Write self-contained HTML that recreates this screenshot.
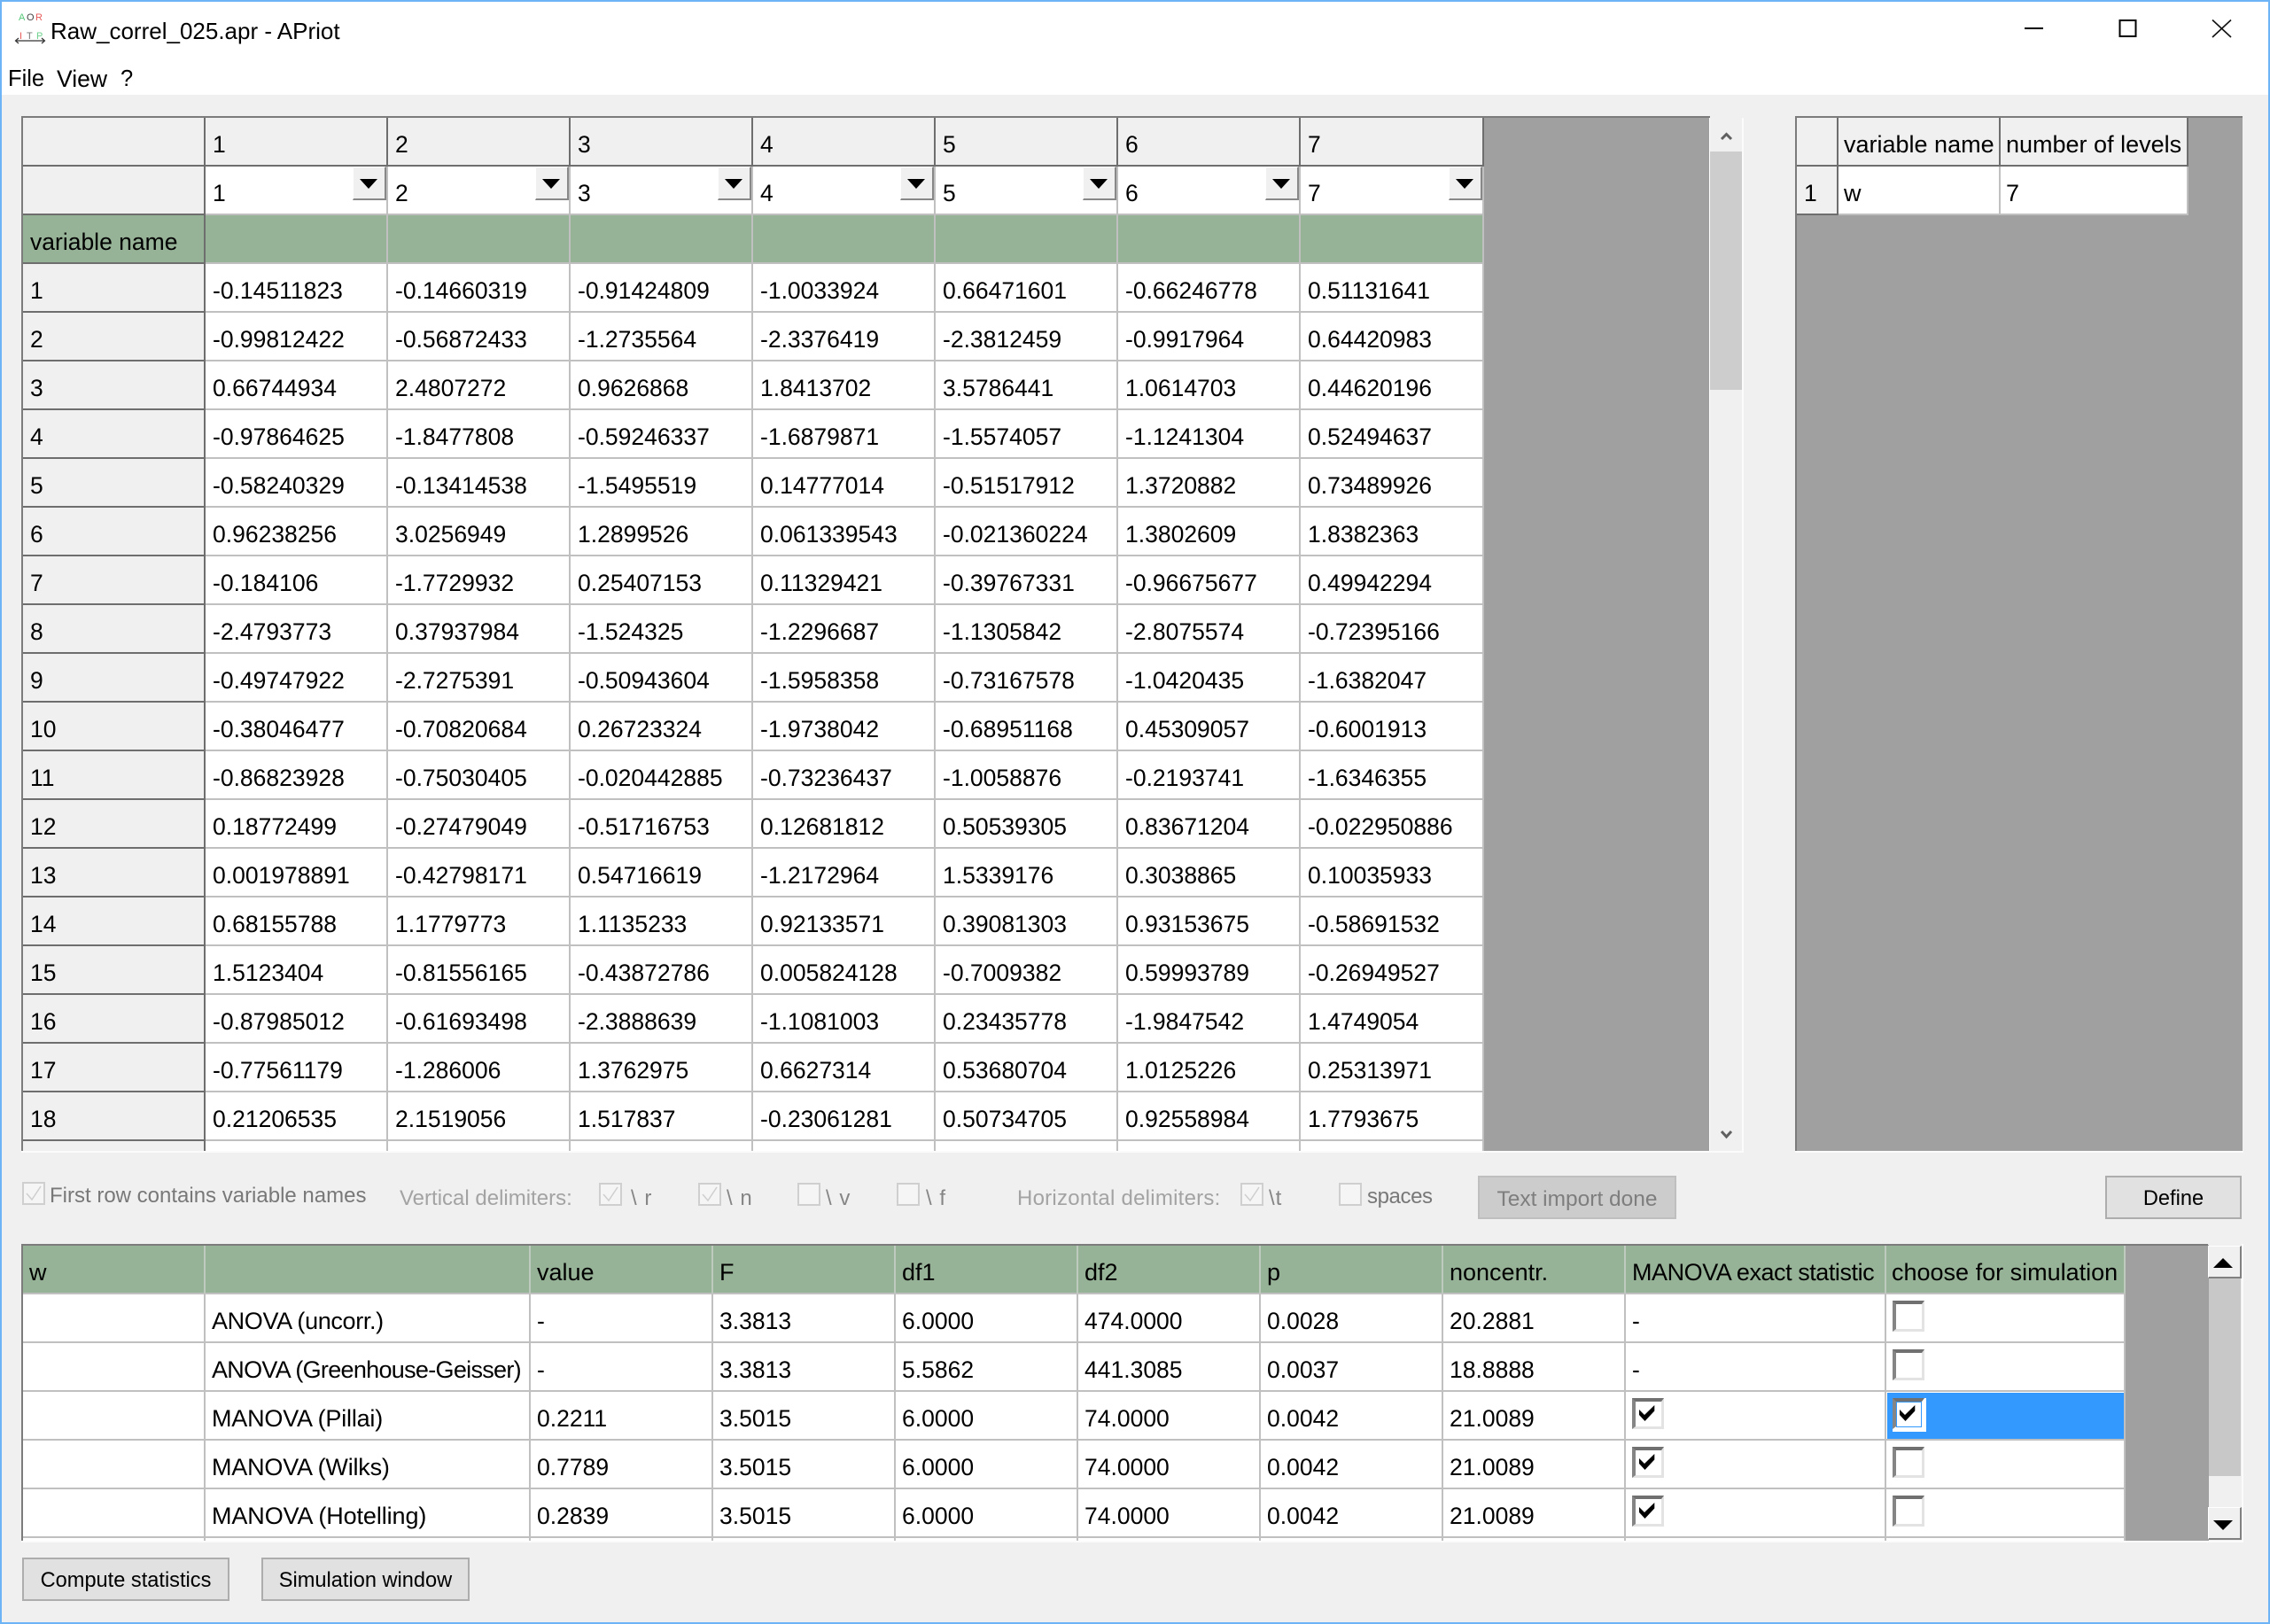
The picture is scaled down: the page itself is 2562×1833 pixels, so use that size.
<!DOCTYPE html>
<html><head><meta charset="utf-8"><title>Raw_correl_025.apr - APriot</title>
<style>
html,body{margin:0;padding:0;width:2562px;height:1833px;overflow:hidden;background:#f0f0f0;font-family:"Liberation Sans",sans-serif;font-size:27px;color:#000}
.a{position:absolute;white-space:nowrap}
.frame{position:absolute;background:#a0a0a0;overflow:hidden;border-top:2px solid #7c7c7c;border-left:2px solid #7c7c7c;box-sizing:border-box}
table{border-collapse:separate;border-spacing:0;table-layout:fixed;position:absolute;left:0;top:0}
tr{height:55px}
td{box-sizing:border-box;height:55px;padding:12px 0 0 7px;line-height:36px;vertical-align:top;border-right:2px solid #c0c0c0;border-bottom:2px solid #c0c0c0;background:#fff;white-space:nowrap;overflow:hidden;font-size:26.5px}
.m td{padding-left:8px}
td.h{background:#f0f0f0;border-color:#6e6e6e}
td.g{background:#97b397}
td.g2{background:#97b397;border-right-color:#bfcabf;border-bottom-color:#c0c0c0;font-size:27px}
td.l{font-size:27px}
.btn{position:absolute;box-sizing:border-box;background:#e1e1e1;border:2px solid #adadad;font-size:23.6px;text-align:center;line-height:49px;white-space:nowrap}
.combo{position:absolute;top:188px;width:38px;height:38px;box-sizing:border-box;background:#f0f0f0;border-top:1px solid #fff;border-left:1px solid #fff;border-right:2px solid #888;border-bottom:2px solid #888}
.combo:after{content:"";position:absolute;left:7px;top:13px;border-left:10.5px solid transparent;border-right:10.5px solid transparent;border-top:11px solid #000}
.d{position:absolute;font-size:24px;line-height:30px;white-space:nowrap;color:#a3a3a3}
.s{color:#858585;letter-spacing:1px}
.dc{position:absolute;box-sizing:border-box;width:26px;height:26px;border:2px solid #cfcfcf;background:#f5f5f5}
.cb{position:absolute;box-sizing:border-box;width:36px;height:35px;background:#fff;border-top:4px solid #707070;border-left:4px solid #858585;border-right:3px solid #e3e3e3;border-bottom:3px solid #e3e3e3}
svg{position:absolute;overflow:visible}
</style></head><body>
<div class="a" style="left:0;top:0;width:2562px;height:107px;background:#fff"></div>
<svg style="left:10px;top:8px" width="50" height="45"><g font-family="Liberation Sans" font-size="11"><text x="11" y="15" fill="#55c878">A</text><text x="20" y="15" fill="#444">O</text><text x="30" y="15" fill="#e85a5a">R</text><text x="12" y="36" fill="#e85a5a">I</text><text x="20" y="36" fill="#777">T</text><text x="31" y="36" fill="#6cd08a">P</text></g><path d="M8 38H40M11 35L7.500 38 11 41M37 35L40.500 38 37 41" fill="none" stroke="#333" stroke-width="1.200"/></svg>
<div class="a" style="left:57px;top:17px;font-size:26px;line-height:36px">Raw_correl_025.apr - APriot</div>
<div class="a" style="left:9px;top:71px;font-size:25.500px;line-height:36px">File</div>
<div class="a" style="left:64px;top:71px;font-size:26.500px;line-height:36px">View</div>
<div class="a" style="left:136px;top:71px;font-size:25.500px;line-height:36px">?</div>
<svg style="left:0;top:0" width="2562" height="60"><path d="M2285 32H2306" stroke="#000" stroke-width="2"/><path d="M2392.500 23h18v18h-18z" fill="none" stroke="#000" stroke-width="2"/><path d="M2497 22.500L2518 42M2518 22.500L2497 42" stroke="#111" stroke-width="1.600"/></svg>

<!-- main data table -->
<div class="frame" style="left:24px;top:131px;width:1906px;height:1168px">
<table class="m" style="width:1649px"><colgroup><col style="width:206px"><col style="width:206px"><col style="width:206px"><col style="width:206px"><col style="width:206px"><col style="width:206px"><col style="width:206px"><col style="width:207px"></colgroup>
<tr><td class="h"></td><td class="h">1</td><td class="h">2</td><td class="h">3</td><td class="h">4</td><td class="h">5</td><td class="h">6</td><td class="h">7</td></tr>
<tr><td class="h"></td><td>1</td><td>2</td><td>3</td><td>4</td><td>5</td><td>6</td><td>7</td></tr>
<tr><td class="h" style="background:#97b397">variable name</td><td class="g"></td><td class="g"></td><td class="g"></td><td class="g"></td><td class="g"></td><td class="g"></td><td class="g"></td></tr>
<tr><td class="h">1</td><td>-0.14511823</td><td>-0.14660319</td><td>-0.91424809</td><td>-1.0033924</td><td>0.66471601</td><td>-0.66246778</td><td>0.51131641</td></tr>
<tr><td class="h">2</td><td>-0.99812422</td><td>-0.56872433</td><td>-1.2735564</td><td>-2.3376419</td><td>-2.3812459</td><td>-0.9917964</td><td>0.64420983</td></tr>
<tr><td class="h">3</td><td>0.66744934</td><td>2.4807272</td><td>0.9626868</td><td>1.8413702</td><td>3.5786441</td><td>1.0614703</td><td>0.44620196</td></tr>
<tr><td class="h">4</td><td>-0.97864625</td><td>-1.8477808</td><td>-0.59246337</td><td>-1.6879871</td><td>-1.5574057</td><td>-1.1241304</td><td>0.52494637</td></tr>
<tr><td class="h">5</td><td>-0.58240329</td><td>-0.13414538</td><td>-1.5495519</td><td>0.14777014</td><td>-0.51517912</td><td>1.3720882</td><td>0.73489926</td></tr>
<tr><td class="h">6</td><td>0.96238256</td><td>3.0256949</td><td>1.2899526</td><td>0.061339543</td><td>-0.021360224</td><td>1.3802609</td><td>1.8382363</td></tr>
<tr><td class="h">7</td><td>-0.184106</td><td>-1.7729932</td><td>0.25407153</td><td>0.11329421</td><td>-0.39767331</td><td>-0.96675677</td><td>0.49942294</td></tr>
<tr><td class="h">8</td><td>-2.4793773</td><td>0.37937984</td><td>-1.524325</td><td>-1.2296687</td><td>-1.1305842</td><td>-2.8075574</td><td>-0.72395166</td></tr>
<tr><td class="h">9</td><td>-0.49747922</td><td>-2.7275391</td><td>-0.50943604</td><td>-1.5958358</td><td>-0.73167578</td><td>-1.0420435</td><td>-1.6382047</td></tr>
<tr><td class="h">10</td><td>-0.38046477</td><td>-0.70820684</td><td>0.26723324</td><td>-1.9738042</td><td>-0.68951168</td><td>0.45309057</td><td>-0.6001913</td></tr>
<tr><td class="h">11</td><td>-0.86823928</td><td>-0.75030405</td><td>-0.020442885</td><td>-0.73236437</td><td>-1.0058876</td><td>-0.2193741</td><td>-1.6346355</td></tr>
<tr><td class="h">12</td><td>0.18772499</td><td>-0.27479049</td><td>-0.51716753</td><td>0.12681812</td><td>0.50539305</td><td>0.83671204</td><td>-0.022950886</td></tr>
<tr><td class="h">13</td><td>0.001978891</td><td>-0.42798171</td><td>0.54716619</td><td>-1.2172964</td><td>1.5339176</td><td>0.3038865</td><td>0.10035933</td></tr>
<tr><td class="h">14</td><td>0.68155788</td><td>1.1779773</td><td>1.1135233</td><td>0.92133571</td><td>0.39081303</td><td>0.93153675</td><td>-0.58691532</td></tr>
<tr><td class="h">15</td><td>1.5123404</td><td>-0.81556165</td><td>-0.43872786</td><td>0.005824128</td><td>-0.7009382</td><td>0.59993789</td><td>-0.26949527</td></tr>
<tr><td class="h">16</td><td>-0.87985012</td><td>-0.61693498</td><td>-2.3888639</td><td>-1.1081003</td><td>0.23435778</td><td>-1.9847542</td><td>1.4749054</td></tr>
<tr><td class="h">17</td><td>-0.77561179</td><td>-1.286006</td><td>1.3762975</td><td>0.6627314</td><td>0.53680704</td><td>1.0125226</td><td>0.25313971</td></tr>
<tr><td class="h">18</td><td>0.21206535</td><td>2.1519056</td><td>1.517837</td><td>-0.23061281</td><td>0.50734705</td><td>0.92558984</td><td>1.7793675</td></tr>
<tr><td class="h"></td><td></td><td></td><td></td><td></td><td></td><td></td><td></td></tr>
</table></div>
<div class="combo" style="left:398px"></div><div class="combo" style="left:604px"></div><div class="combo" style="left:810px"></div><div class="combo" style="left:1016px"></div><div class="combo" style="left:1222px"></div><div class="combo" style="left:1428px"></div><div class="combo" style="left:1635px"></div>
<!-- main scrollbar -->
<div class="a" style="left:1929px;top:133px;width:38px;height:1166px;background:#f0f0f0;border-left:1px solid #fff;box-sizing:border-box"></div>
<div class="a" style="left:1930px;top:171px;width:36px;height:269px;background:#cdcdcd"></div>
<div class="a" style="left:24px;top:1299px;width:1944px;height:2px;background:#fbfbfb"></div>
<div class="a" style="left:1966px;top:133px;width:2px;height:1167px;background:#fbfbfb"></div>
<svg style="left:0;top:0" width="2562" height="1300"><path d="M1943 157L1948.500 151.500 1954 157M1943 1277L1948.500 1283 1954 1277" fill="none" stroke="#606060" stroke-width="3"/></svg>

<!-- factor table -->
<div class="frame" style="left:2026px;top:131px;width:505px;height:1168px">
<table style="width:442px"><colgroup><col style="width:47px"><col style="width:183px"><col style="width:212px"></colgroup>
<tr><td class="h"></td><td class="h l" style="padding-left:6px">variable name</td><td class="h l" style="padding-left:6px">number of levels</td></tr>
<tr><td class="h" style="padding-left:8px">1</td><td class="l" style="padding-left:6px">w</td><td class="l" style="padding-left:6px">7</td></tr>
</table></div>
<div class="a" style="left:2026px;top:1299px;width:506px;height:2px;background:#fbfbfb"></div>

<!-- delimiter row -->
<div class="dc" style="left:25px;top:1334px"></div><div class="d" style="left:56px;top:1335px;color:#787878">First row contains variable names</div>
<div class="d" style="left:451px;top:1338px">Vertical delimiters:</div>
<div class="dc" style="left:676px;top:1335px"></div><div class="d s" style="left:712px;top:1338px">\ r</div>
<div class="dc" style="left:788px;top:1335px"></div><div class="d s" style="left:820px;top:1338px">\ n</div>
<div class="dc" style="left:900px;top:1335px"></div><div class="d s" style="left:932px;top:1338px">\ v</div>
<div class="dc" style="left:1012px;top:1335px"></div><div class="d s" style="left:1045px;top:1338px">\ f</div>
<div class="d" style="left:1148px;top:1338px;letter-spacing:.25px">Horizontal delimiters:</div>
<div class="dc" style="left:1400px;top:1335px"></div><div class="d s" style="left:1432px;top:1338px">\t</div>
<div class="dc" style="left:1511px;top:1335px"></div><div class="d" style="left:1543px;top:1336px;color:#787878;letter-spacing:-.4px">spaces</div>
<svg style="left:0;top:0" width="2562" height="1400"><g fill="none" stroke="#cfcfcf" stroke-width="1.500"><path d="M30 1347l6 7 10-15"/><path d="M681 1348l6 7 10-15"/><path d="M793 1348l6 7 10-15"/><path d="M1405 1348l6 7 10-15"/></g></svg>
<div class="btn" style="left:1668px;top:1327px;width:224px;height:49px;background:#ccc;border-color:#bfbfbf;color:#7e7e7e;font-size:24.500px">Text import done</div>
<div class="btn" style="left:2376px;top:1327px;width:154px;height:49px">Define</div>

<!-- statistics table -->
<div class="frame" style="left:24px;top:1404px;width:2468px;height:335px">
<table style="width:2373px"><colgroup><col style="width:206px"><col style="width:367px"><col style="width:206px"><col style="width:206px"><col style="width:206px"><col style="width:206px"><col style="width:206px"><col style="width:206px"><col style="width:294px"><col style="width:270px"></colgroup>
<tr><td class="g2">w</td><td class="g2"></td><td class="g2">value</td><td class="g2">F</td><td class="g2">df1</td><td class="g2">df2</td><td class="g2">p</td><td class="g2">noncentr.</td><td class="g2" style="letter-spacing:-.45px">MANOVA exact statistic</td><td class="g2" style="padding-left:6px">choose for simulation</td></tr>
<tr><td></td><td class="l" style="letter-spacing:-.35px">ANOVA (uncorr.)</td><td>-</td><td>3.3813</td><td>6.0000</td><td>474.0000</td><td>0.0028</td><td>20.2881</td><td>-</td><td></td></tr>
<tr><td></td><td class="l" style="letter-spacing:-.7px">ANOVA (Greenhouse-Geisser)</td><td>-</td><td>3.3813</td><td>5.5862</td><td>441.3085</td><td>0.0037</td><td>18.8888</td><td>-</td><td></td></tr>
<tr><td></td><td class="l" style="letter-spacing:-.2px">MANOVA (Pillai)</td><td>0.2211</td><td>3.5015</td><td>6.0000</td><td>74.0000</td><td>0.0042</td><td>21.0089</td><td></td><td></td></tr>
<tr><td></td><td class="l" style="letter-spacing:-.2px">MANOVA (Wilks)</td><td>0.7789</td><td>3.5015</td><td>6.0000</td><td>74.0000</td><td>0.0042</td><td>21.0089</td><td></td><td></td></tr>
<tr><td></td><td class="l" style="letter-spacing:-.1px">MANOVA (Hotelling)</td><td>0.2839</td><td>3.5015</td><td>6.0000</td><td>74.0000</td><td>0.0042</td><td>21.0089</td><td></td><td></td></tr>
<tr><td></td><td></td><td></td><td></td><td></td><td></td><td></td><td></td><td></td><td></td></tr>
</table></div>
<div class="a" style="left:24px;top:1739px;width:2508px;height:2px;background:#fbfbfb"></div>
<!-- selected cell -->
<div class="a" style="left:2130px;top:1572px;width:267px;height:52px;background:#3399ff"></div>
<!-- checkboxes -->
<div class="cb" style="left:2136px;top:1468px"></div>
<div class="cb" style="left:2136px;top:1523px"></div>
<div class="a" style="left:2136px;top:1578px;width:38px;height:38px;background:#fff"></div>
<div class="cb" style="left:2136px;top:1578px;border-right-color:#fff;border-bottom-color:#fff"></div>
<div class="a" style="left:2140px;top:1582px;width:29px;height:29px;box-sizing:border-box;border:1px solid #3399ff;background:#fff"></div>
<div class="cb" style="left:2136px;top:1633px"></div>
<div class="cb" style="left:2136px;top:1688px"></div>
<div class="cb" style="left:1842px;top:1578px"></div>
<div class="cb" style="left:1842px;top:1633px"></div>
<div class="cb" style="left:1842px;top:1688px"></div>
<svg style="left:0;top:0" width="2562" height="1833"><g fill="#000"><path d="M1850 1591L1856 1597 1867.300 1586V1592.500L1856.500 1604 1850 1597z"/><path d="M1850 1646L1856 1652 1867.300 1641V1647.500L1856.500 1659 1850 1652z"/><path d="M1850 1701L1856 1707 1867.300 1696V1702.500L1856.500 1714 1850 1707z"/><path d="M2144 1591L2150 1597 2161.300 1586V1592.500L2150.500 1604 2144 1597z"/></g></svg>
<!-- stats scrollbar -->
<div class="a" style="left:2492px;top:1405px;width:38px;height:334px;background:#f0f0f0;box-sizing:border-box;border-left:1px solid #a0a0a0"></div>
<div class="a" style="left:2493px;top:1443px;width:36px;height:223px;background:#c8c8c8"></div>
<div class="a" style="left:2492px;top:1406px;width:38px;height:37px;box-sizing:border-box;background:#f0f0f0;border-top:1px solid #fff;border-left:1px solid #fff;border-right:2px solid #808080;border-bottom:2px solid #808080"></div>
<div class="a" style="left:2492px;top:1701px;width:38px;height:37px;box-sizing:border-box;background:#f0f0f0;border-top:1px solid #fff;border-left:1px solid #fff;border-right:2px solid #808080;border-bottom:2px solid #808080"></div>
<svg style="left:0;top:0" width="2562" height="1833"><path d="M2498 1431L2509 1420 2520 1431z" fill="#000"/><path d="M2498 1716L2520 1716 2509 1727z" fill="#000"/></svg>
<div class="a" style="left:2530px;top:1404px;width:2px;height:337px;background:#fbfbfb"></div>

<div class="btn" style="left:25px;top:1758px;width:234px;height:49px">Compute statistics</div>
<div class="btn" style="left:295px;top:1758px;width:235px;height:49px">Simulation window</div>

<!-- window border -->
<div class="a" style="left:0;top:0;width:2562px;height:2px;background:#6cb4f6"></div>
<div class="a" style="left:0;top:1831px;width:2562px;height:2px;background:#6cb4f6"></div>
<div class="a" style="left:0;top:0;width:2px;height:1833px;background:#6cb4f6"></div>
<div class="a" style="left:2560px;top:0;width:2px;height:1833px;background:#6cb4f6"></div>
</body></html>
